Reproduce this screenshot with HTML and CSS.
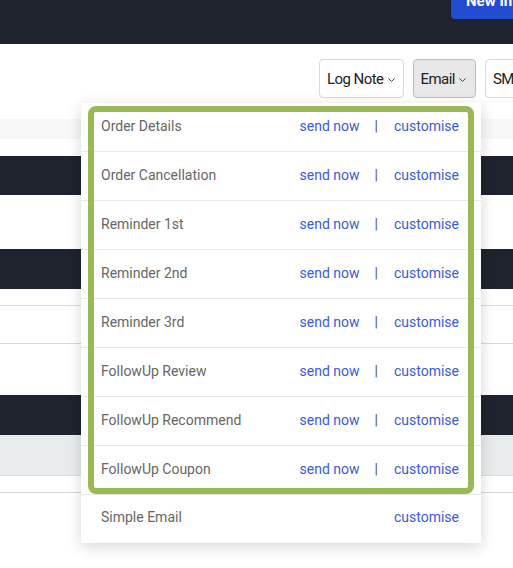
FILE: index.html
```html
<!DOCTYPE html>
<html>
<head>
<meta charset="utf-8">
<link rel="stylesheet" href="styles.css">
</head>
<body>
<div class="page">
  <header class="topbar">
    <button class="new-btn"><span>New Invoice</span></button>
  </header>
  <div class="toolbar">
    <button class="tool-btn">Log Note <svg class="chev" viewBox="0 0 7 4" width="7" height="4"><path d="M0.5 0.5 L3.5 3.4 L6.5 0.5" fill="none" stroke="#444" stroke-width="1"/></svg></button>
    <button class="tool-btn active">Email <svg class="chev" viewBox="0 0 7 4" width="7" height="4"><path d="M0.5 0.5 L3.5 3.4 L6.5 0.5" fill="none" stroke="#444" stroke-width="1"/></svg></button>
    <button class="tool-btn">SMS <svg class="chev" viewBox="0 0 7 4" width="7" height="4"><path d="M0.5 0.5 L3.5 3.4 L6.5 0.5" fill="none" stroke="#444" stroke-width="1"/></svg></button>
  </div>
  <div class="bg-strip"></div>
  <div class="bg-gap17"></div>
  <div class="bg-dark h39"></div>
  <div class="bg-white h54"></div>
  <div class="bg-dark h40"></div>
  <div class="bg-white h16"></div>
  <div class="bg-row h38"></div>
  <div class="bg-row-b h52"></div>
  <div class="bg-dark h40"></div>
  <div class="bg-gray h40"></div>
  <div class="bg-line-b h16"></div>

  <div class="menu">
    <div class="menu-row"><span class="label">Order Details</span><span class="actions"><a>send now</a><span class="sep">|</span><a>customise</a></span></div>
    <div class="menu-row"><span class="label">Order Cancellation</span><span class="actions"><a>send now</a><span class="sep">|</span><a>customise</a></span></div>
    <div class="menu-row"><span class="label">Reminder 1st</span><span class="actions"><a>send now</a><span class="sep">|</span><a>customise</a></span></div>
    <div class="menu-row"><span class="label">Reminder 2nd</span><span class="actions"><a>send now</a><span class="sep">|</span><a>customise</a></span></div>
    <div class="menu-row"><span class="label">Reminder 3rd</span><span class="actions"><a>send now</a><span class="sep">|</span><a>customise</a></span></div>
    <div class="menu-row"><span class="label">FollowUp Review</span><span class="actions"><a>send now</a><span class="sep">|</span><a>customise</a></span></div>
    <div class="menu-row"><span class="label">FollowUp Recommend</span><span class="actions"><a>send now</a><span class="sep">|</span><a>customise</a></span></div>
    <div class="menu-row"><span class="label">FollowUp Coupon</span><span class="actions"><a>send now</a><span class="sep">|</span><a>customise</a></span></div>
    <div class="menu-row last"><span class="label">Simple Email</span><span class="actions"><a>customise</a></span></div>
    <div class="highlight"></div>
  </div>
</div>
</body>
</html>
```

FILE: styles.css
```css
html, body {
  margin: 0;
  padding: 0;
  width: 513px;
  height: 568px;
  overflow: hidden;
  background: #fff;
  font-family: Roboto, "Liberation Sans", Arial, sans-serif;
}
.page {
  position: relative;
  width: 513px;
  height: 568px;
  overflow: hidden;
}
.topbar {
  height: 44px;
  background: #1e232e;
  display: flex;
  justify-content: flex-end;
  align-items: flex-start;
  overflow: hidden;
}
.new-btn {
  width: 120px;
  height: 19px;
  margin-right: -58px;
  border: none;
  padding: 0 0 0 15px;
  background: #234bd2;
  border-radius: 0 0 0 4px;
  overflow: hidden;
  text-align: left;
  display: block;
}
.new-btn span {
  display: block;
  margin-top: -17px;
  color: #fff;
  font-family: Roboto, "Liberation Sans", sans-serif;
  font-weight: 700;
  font-size: 15px;
  line-height: 18px;
}
.toolbar {
  height: 75px;
  box-sizing: border-box;
  padding-top: 15px;
  display: flex;
  justify-content: flex-start;
  align-items: flex-start;
  gap: 9px;
  padding-left: 319px;
}
.tool-btn {
  flex: none;
  height: 39px;
  box-sizing: border-box;
  padding: 0 8px 0 7px;
  background: #fff;
  border: 1px solid #dadada;
  border-radius: 4px;
  font-family: Roboto, "Liberation Sans", sans-serif;
  font-size: 15px;
  letter-spacing: -0.55px;
  color: #212121;
  display: flex;
  align-items: center;
  gap: 4px;
}
.tool-btn.active {
  background: #e8e8e8;
  border-color: #bdbdbd;
  padding-right: 9px;
}
.tool-btn .chev {
  margin-top: 2px;
}
.bg-strip { height: 20px; background: #f8f8f8; }
.bg-gap17 { height: 17px; }
.bg-dark { background: #1e232e; }
.bg-white { background: #fff; }
.bg-gray { background: #e9eced; }
.bg-row { border-top: 1px solid #d9d9d9; box-sizing: border-box; }
.bg-row-b { border-top: 1px solid #d9d9d9; box-sizing: border-box; }
.bg-line-b { border-top: 1px solid #dcdcdc; border-bottom: 1px solid #d9d9d9; box-sizing: content-box; }
.h16 { height: 16px; }
.h38 { height: 38px; }
.h39 { height: 39px; }
.h40 { height: 40px; }
.h52 { height: 52px; }
.h54 { height: 54px; }

.menu {
  position: absolute;
  left: 81px;
  top: 103px;
  width: 400px;
  background: #fff;
  box-shadow: 0 4px 14px rgba(0, 0, 0, 0.16);
}
.menu-row {
  height: 49px;
  box-sizing: border-box;
  border-bottom: 1px solid #e9e9e9;
  display: flex;
  align-items: center;
  padding: 0 22px 3px 20px;
  font-size: 14px;
}
.menu-row.last {
  height: 48px;
  border-bottom: none;
  padding-bottom: 4px;
}
.label {
  flex: 1;
  color: #666;
}
.actions {
  display: flex;
  align-items: center;
  color: #3c5fd9;
}
.actions a {
  color: #3a5bd6;
  cursor: pointer;
}
.sep {
  color: #555;
  margin: 0 16px 0 15px;
}
.highlight {
  position: absolute;
  left: 7px;
  top: 3px;
  width: 386px;
  height: 388px;
  box-sizing: border-box;
  border: 6px solid #9bb858;
  border-radius: 8px;
  pointer-events: none;
}
```
